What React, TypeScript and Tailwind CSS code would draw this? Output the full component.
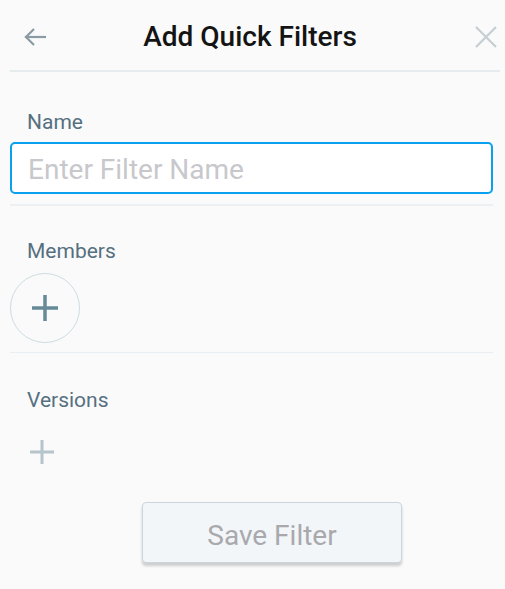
import React from "react";

export default function App() {
  return (
    <div className="min-h-[589px] w-[505px] bg-[#fafafa] font-['Roboto','Liberation_Sans',sans-serif]">
      <div className="ml-[10px] mr-[5px] flex h-[72px] items-center border-b-2 border-[#e6ebee] pt-[4px]">
        <div className="flex w-[36px] shrink-0 pl-[14px]">
          <svg width="22" height="20" viewBox="0 0 22 20" fill="none" stroke="#8b9ba3" strokeWidth="2.2" strokeLinecap="square">
            <path d="M2 10H21" />
            <path d="M10 2L2 10L10 18" strokeLinecap="butt" />
          </svg>
        </div>
        <div className="flex-1 text-center text-[28px] font-medium leading-[32px] text-[#141414]">Add Quick Filters</div>
        <div className="flex w-[46px] shrink-0 justify-end pr-[3px]">
          <svg width="22" height="22" viewBox="0 0 22 22" fill="none" stroke="#c5ced3" strokeWidth="2.2">
            <path d="M1 1L21 21M21 1L1 21" />
          </svg>
        </div>
      </div>

      <div className="pl-[10px] pr-[12px]">
        <div className="mt-[38px] pl-[17px] text-[21px] leading-[24px] text-[#557080]">Name</div>
        <input
          className="mt-[8px] block h-[52px] w-full rounded-[5px] border-2 border-[#0aa0f0] bg-white px-[16px] pt-[2px] text-[28px] text-[#333] outline-none placeholder:text-[#c8c8cc]"
          placeholder="Enter Filter Name"
        />
        <div className="mt-[10px] h-[2px] bg-[#ecf0f3]" />

        <div className="mt-[33px] pl-[17px] text-[21px] leading-[24px] text-[#557080]">Members</div>
        <div className="mt-[10px] flex h-[70px] w-[70px] items-center justify-center rounded-full border-[1.5px] border-[#cddde2]">
          <svg width="26" height="26" viewBox="0 0 26 26" fill="none" stroke="#668a98" strokeWidth="3.5">
            <path d="M13 0V26M0 13H26" />
          </svg>
        </div>
        <div className="mt-[9px] h-px bg-[#e8eef1]" />

        <div className="mt-[35px] pl-[17px] text-[21px] leading-[24px] text-[#557080]">Versions</div>
        <div className="mt-[28px] pl-[20px]">
          <svg width="24" height="24" viewBox="0 0 24 24" fill="none" stroke="#b6c4cb" strokeWidth="3">
            <path d="M12 0V24M0 12H24" />
          </svg>
        </div>

        <div className="ml-[132px] mt-[38px] flex h-[61px] w-[260px] items-center justify-center rounded-[4px] border border-[#cbd5db] bg-[#f2f6f9] pt-[6px] text-[28px] text-[#a9a9ad] shadow-[0_3px_3px_rgba(0,0,0,0.18)]">
          Save Filter
        </div>
      </div>
    </div>
  );
}
